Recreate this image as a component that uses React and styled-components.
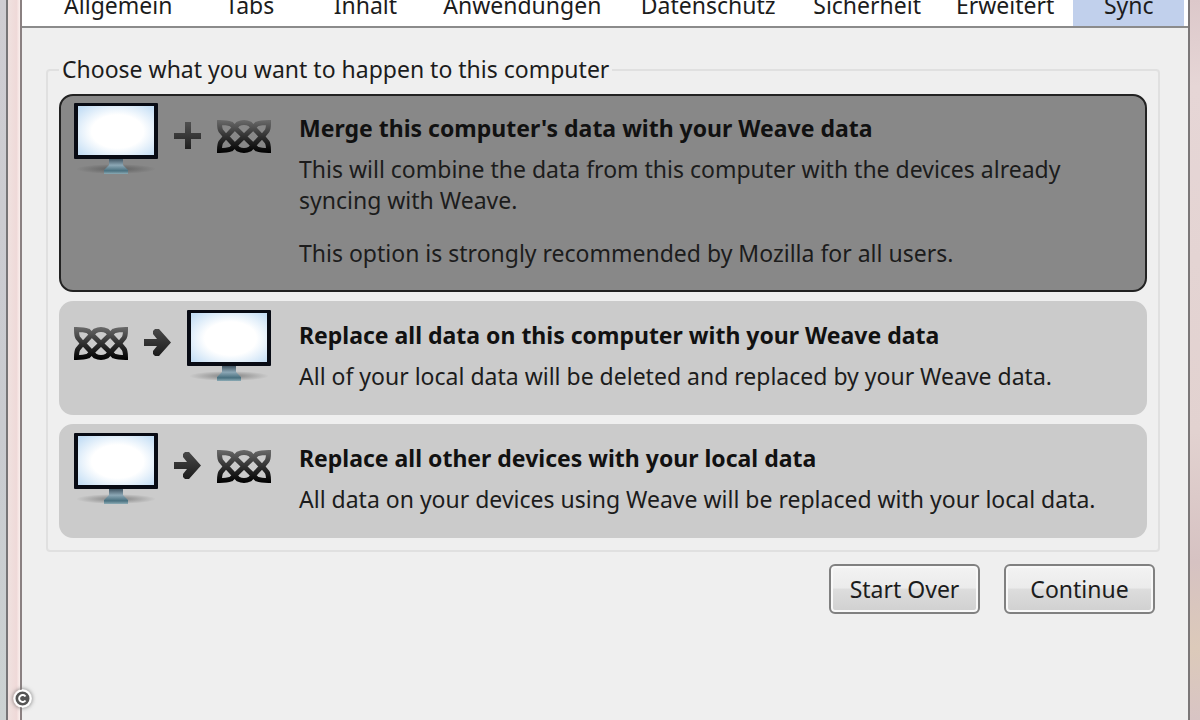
import React, { useState } from "react";
import styled, { createGlobalStyle } from "styled-components";

const GlobalStyle = createGlobalStyle`
  * {
    box-sizing: border-box;
  }

  body {
    margin: 0;
    overflow: hidden;
    font-family: "Noto Sans", "Open Sans", sans-serif;
    font-size: 23px;
    line-height: 31px;
    color: #1c1c1c;
  }

  button {
    font: inherit;
    color: inherit;
    cursor: pointer;
  }
`;

const Desktop = styled.div`
  position: relative;
  display: flex;
  height: 100vh;
`;

const OuterEdge = styled.div`
  width: 8px;
  border-right: 2px solid #777577;
  background: linear-gradient(#cfcdd2, #c9cbd0 60%, #ccd2d2);
`;

const Frame = styled.div`
  width: ${(props) => (props.$right ? "12px" : "14px")};
  background: ${(props) =>
    props.$right
      ? "linear-gradient(#dcc8ca, #e6d6d6 12%, #e2d2d0 60%, #d6c2c2 78%, #dccaba 90%, #d8c4c4)"
      : "linear-gradient(90deg, #f0e2e0, #efd9d8 70%, #fbf0ee)"};
  border-left: ${(props) => (props.$right ? "2px solid #7b7778" : "none")};
  border-right: ${(props) => (props.$right ? "none" : "2px solid #8a8081")};
`;

const Window = styled.div`
  flex: 1;
  min-width: 0;
  background-color: #efefef;
`;

const TabBar = styled.nav`
  display: flex;
  align-items: flex-end;
  gap: 4px;
  height: 28px;
  padding: 0 4px 0 24px;
  overflow: hidden;
  background-color: #fff;
  border-bottom: 2px solid #8b8b8b;
`;

const Tab = styled.button`
  flex: ${(props) => props.$grow} 0 0;
  min-width: 0;
  padding: 8px 0 5px;
  border: none;
  white-space: nowrap;
  background-color: ${(props) => (props.$active ? "#c1d0ec" : "transparent")};
`;

const Pane = styled.main`
  padding: 26px 28px 0 24px;
`;

const Group = styled.fieldset`
  display: flex;
  flex-direction: column;
  gap: 9px;
  min-width: 0;
  margin: 0;
  padding: 9px 11px 12px;
  border: 2px solid #e0e0e0;
  border-radius: 4px;
`;

const Legend = styled.legend`
  padding: 0 3px;
`;

const Option = styled.label`
  display: flex;
  gap: 28px;
  padding: 7px 13px 21px;
  border: 2px solid ${(props) => (props.$selected ? "#222" : "#cbcbcb")};
  border-radius: 14px;
  background-color: ${(props) => (props.$selected ? "#888" : "#cbcbcb")};
  cursor: pointer;
`;

const Radio = styled.input`
  position: absolute;
  opacity: 0;
  pointer-events: none;
`;

const Icons = styled.div`
  display: flex;
  gap: 16px;
  height: 74px;
  flex-shrink: 0;

  svg {
    display: block;
  }
`;

const Texts = styled.div`
  padding-top: 10px;
`;

const Title = styled.strong`
  display: block;
  margin-bottom: 10px;
  color: #111;
`;

const Description = styled.p`
  margin: 0;

  & + & {
    margin-top: 22px;
  }
`;

const Actions = styled.div`
  display: flex;
  justify-content: flex-end;
  gap: 24px;
  padding: 12px 5px 0;
`;

const ActionButton = styled.button`
  min-width: 151px;
  height: 50px;
  padding: 0 16px;
  border: 2px solid #808080;
  border-radius: 6px;
  background: linear-gradient(#f3f3f3, #ebebeb 48%, #dddddd 50%, #d0d0d0);
  box-shadow: inset 0 0 0 2px #f8f8f8;
`;

const Credit = styled.span`
  position: absolute;
  left: 13px;
  bottom: 12px;
  width: 19px;
  height: 19px;
  border-radius: 50%;
  box-shadow: 0 0 4px #777;

  svg {
    display: block;
  }
`;

const Monitor = () => (
  <svg width="84" height="74" viewBox="0 0 84 74" aria-hidden="true">
    <defs>
      <radialGradient id="screen" cx="0.52" cy="0.52" r="0.68">
        <stop offset="0.5" stopColor="#fff" />
        <stop offset="1" stopColor="#c4def5" />
      </radialGradient>
      <radialGradient id="shadow">
        <stop offset="0" stopColor="#333" stopOpacity="0.5" />
        <stop offset="1" stopColor="#333" stopOpacity="0" />
      </radialGradient>
      <linearGradient id="stand" x2="0" y2="1">
        <stop offset="0" stopColor="#344755" />
        <stop offset="0.45" stopColor="#8ca7b5" />
        <stop offset="0.8" stopColor="#49707f" />
        <stop offset="1" stopColor="#8cabb5" />
      </linearGradient>
    </defs>
    <ellipse cx="42" cy="66" rx="40" ry="5" fill="url(#shadow)" />
    <path d="M35 55h14v7l5 5v4H30v-4l5-5z" fill="url(#stand)" />
    <rect width="84" height="56" rx="1" fill="#080b14" />
    <rect x="4" y="3" width="76" height="49" fill="url(#screen)" />
  </svg>
);

const Knot = () => (
  <svg width="54" height="74" viewBox="0 -17 54 74" fill="none" aria-hidden="true">
    <defs>
      <linearGradient id="knot" gradientUnits="userSpaceOnUse" x1="0" y1="0" x2="0" y2="33">
        <stop offset="0" stopColor="#6a6a6a" />
        <stop offset="0.5" stopColor="#303030" />
        <stop offset="1" stopColor="#000" />
      </linearGradient>
    </defs>
    <g stroke="url(#knot)" strokeWidth="5">
      <path d="M8 18L21 4Q27 1 33 4L46 18M8 15L21 29Q27 32 33 29L46 15" />
      <path d="M9 17L4 11Q2.500 9 2.500 2.500Q10 2.500 14 4L27 16.500L40 29Q44 30.500 51.500 30.500Q51.500 24 50 22L45 16" />
      <path d="M9 16L4 22Q2.500 24 2.500 30.500Q10 30.500 14 29L27 16.500L40 4Q44 2.500 51.500 2.500Q51.500 9 50 11L45 17" />
    </g>
  </svg>
);

const Plus = () => (
  <svg width="27" height="74" viewBox="0 -19 27 74" aria-hidden="true">
    <defs>
      <linearGradient id="plus" x2="0" y2="1">
        <stop offset="0" stopColor="#505050" />
        <stop offset="1" stopColor="#202020" />
      </linearGradient>
    </defs>
    <path d="M11 0h6v11h10v6H17v10h-6V17H0v-6h11z" fill="url(#plus)" />
  </svg>
);

const Arrow = () => (
  <svg width="27" height="74" viewBox="0 -19 27 74" aria-hidden="true">
    <defs>
      <linearGradient id="arrow" x2="0" y2="1">
        <stop offset="0" stopColor="#484848" />
        <stop offset="1" stopColor="#1c1c1c" />
      </linearGradient>
    </defs>
    <path d="M9 2l2-2h4l12 13.500L15 27h-4l-2-2v-3l4-5H0v-7h13L9 5z" fill="url(#arrow)" />
  </svg>
);

const tabs = [
  { label: "Allgemein", grow: 145 },
  { label: "Tabs", grow: 111 },
  { label: "Inhalt", grow: 113 },
  { label: "Anwendungen", grow: 194 },
  { label: "Datenschutz", grow: 171 },
  { label: "Sicherheit", grow: 140 },
  { label: "Erweitert", grow: 129 },
  { label: "Sync", grow: 111 },
];

const options = [
  {
    id: "merge",
    icons: [Monitor, Plus, Knot],
    title: "Merge this computer's data with your Weave data",
    lines: [
      "This will combine the data from this computer with the devices already syncing with Weave.",
      "This option is strongly recommended by Mozilla for all users.",
    ],
  },
  {
    id: "replace-local",
    icons: [Knot, Arrow, Monitor],
    title: "Replace all data on this computer with your Weave data",
    lines: ["All of your local data will be deleted and replaced by your Weave data."],
  },
  {
    id: "replace-remote",
    icons: [Monitor, Arrow, Knot],
    title: "Replace all other devices with your local data",
    lines: ["All data on your devices using Weave will be replaced with your local data."],
  },
];

const App = () => {
  const [tab, setTab] = useState("Sync");
  const [choice, setChoice] = useState("merge");

  return (
    <Desktop>
      <GlobalStyle />
      <OuterEdge />
      <Frame />
      <Window>
        <TabBar>
          {tabs.map(({ label, grow }) => (
            <Tab
              key={label}
              type="button"
              $grow={grow}
              $active={tab === label}
              onClick={() => setTab(label)}
            >
              {label}
            </Tab>
          ))}
        </TabBar>
        <Pane>
          <Group>
            <Legend>Choose what you want to happen to this computer</Legend>
            {options.map((option) => (
              <Option key={option.id} $selected={choice === option.id}>
                <Radio
                  type="radio"
                  name="sync"
                  value={option.id}
                  checked={choice === option.id}
                  onChange={() => setChoice(option.id)}
                />
                <Icons>
                  {option.icons.map((Icon, i) => (
                    <Icon key={i} />
                  ))}
                </Icons>
                <Texts>
                  <Title>{option.title}</Title>
                  {option.lines.map((line) => (
                    <Description key={line}>{line}</Description>
                  ))}
                </Texts>
              </Option>
            ))}
          </Group>
          <Actions>
            <ActionButton type="button">Start Over</ActionButton>
            <ActionButton type="button">Continue</ActionButton>
          </Actions>
        </Pane>
      </Window>
      <Frame $right />
      <Credit>
        <svg width="19" height="19" viewBox="0 0 19 19" fill="none" aria-label="Copyright">
          <circle cx="9.500" cy="9.500" r="8" fill="#555" stroke="#fff" strokeWidth="2" />
          <path d="M12.500 7.500A3.500 3.500 0 1 0 12.500 11.500" stroke="#fff" strokeWidth="2" />
        </svg>
      </Credit>
    </Desktop>
  );
};

export default App;
